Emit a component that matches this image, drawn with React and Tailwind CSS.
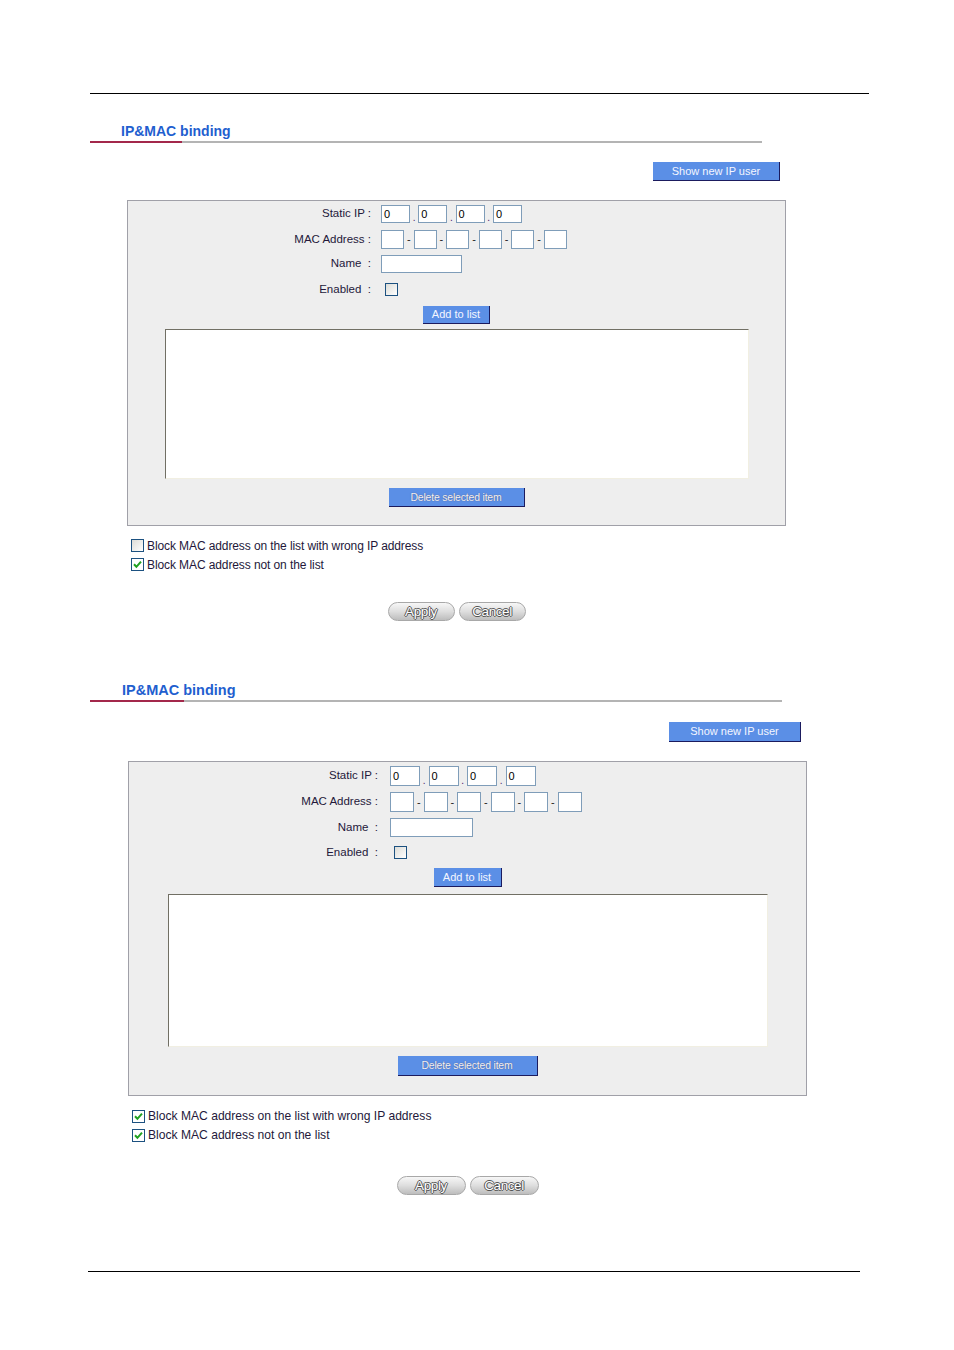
import React from "react";

const FONT = { fontFamily: '"Liberation Sans", Arial, sans-serif' };

const C1 = {
  titleWrap: "mt-[29px] ml-[90px] w-[672px]",
  titleText: "pl-[31px] text-[14px] leading-[16px] h-[16px]",
  red: "w-[92px]",
  showWrap: "mt-[19px] pl-[653px]",
  showBtn: "w-[127px] h-[19px]",
  box: "mt-[19px] ml-[127px] w-[659px] h-[326px] pt-[4px]",
  label: "w-[243px]",
  inGap: "w-[10px]",
  ipIn: "w-[29px] h-[18px]",
  ipSep: "w-[8.3px]",
  macIn: "w-[23px] h-[19px]",
  macSep: "w-[9.6px]",
  name: "w-[81px] h-[18px]",
  row1: "h-[18px]",
  row2: "mt-[7px] h-[19px]",
  row3: "mt-[6px] h-[18px]",
  row4: "mt-[10px] h-[13px]",
  add: "mt-[10px] w-[67px] h-[18px]",
  list: "mt-[5px] w-[584px] h-[150px]",
  del: "mt-[9px] w-[136px] h-[19px]",
  opts: "mt-[10px] ml-[131px]",
  optText: "text-[12px] tracking-[-0.1px]",
  actions: "mt-[28px] ml-[127px] w-[659px]",
  act: "w-[67px] h-[19px]",
  checks: [false, true],
};

const C2 = {
  titleWrap: "mt-[61px] ml-[90px] w-[692px]",
  titleText: "pl-[32px] text-[14.5px] leading-[16px] h-[16px]",
  red: "w-[94px]",
  showWrap: "mt-[20px] pl-[669px]",
  showBtn: "w-[132px] h-[20px]",
  box: "mt-[19px] ml-[128px] w-[679px] h-[335px] pt-[4px]",
  label: "w-[249px]",
  inGap: "w-[12px]",
  ipIn: "w-[30px] h-[20px]",
  ipSep: "w-[8.5px]",
  macIn: "w-[24px] h-[20px]",
  macSep: "w-[9.5px]",
  name: "w-[83px] h-[19px]",
  row1: "h-[20px]",
  row2: "mt-[6px] h-[20px]",
  row3: "mt-[6px] h-[19px]",
  row4: "mt-[9px] h-[13px]",
  add: "mt-[9px] w-[68px] h-[19px]",
  list: "mt-[7px] w-[600px] h-[153px]",
  del: "mt-[9px] w-[140px] h-[20px]",
  opts: "mt-[11px] ml-[132px]",
  optText: "text-[12.1px]",
  actions: "mt-[31px] ml-[128px] w-[679px]",
  act: "w-[69px] h-[19px]",
  checks: [true, true],
};

function CB({ checked }) {
  return (
    <span
      className={
        "inline-flex w-[13px] h-[13px] shrink-0 items-center justify-center border border-[#1c5180] " +
        (checked ? "bg-white" : "bg-linear-to-br from-[#dcdcd7] to-[#ffffff]")
      }
    >
      {checked && (
        <svg width="9" height="9" viewBox="0 0 9 9">
          <path d="M1 4.3 L3.4 6.8 L8 1.6" stroke="#21a121" strokeWidth="2" fill="none" />
        </svg>
      )}
    </span>
  );
}

function Input({ cls, value }) {
  return (
    <div
      className={
        cls +
        " shrink-0 bg-white border border-[#7f9db9] text-[11px] leading-none pl-[2px] flex items-center text-black"
      }
    >
      {value}
    </div>
  );
}

function BlueBtn({ cls, children, embossed }) {
  return (
    <div
      className={
        cls +
        " bg-[#5b8fe6] border-r border-b border-[#1b1b5e] flex items-center justify-center leading-none " +
        (embossed
          ? "text-[#f2f2f8] text-[10.5px] tracking-[-0.2px] [text-shadow:0_0_1px_#4a4a6a]"
          : "text-[#f4f6ff] text-[11px]")
      }
    >
      {children}
    </div>
  );
}

function PillBtn({ cls, children }) {
  return (
    <div
      className={
        cls +
        " rounded-full border border-[#a8a8a8] bg-linear-to-b from-[#f7f7f7] via-[#dedede] to-[#bdbdbd] flex items-center justify-center text-[13.5px] leading-none text-white tracking-[-0.4px] [text-shadow:-1px_0_#555,1px_0_#555,0_-1px_#555,0_1px_#555]"
      }
    >
      {children}
    </div>
  );
}

function Label({ cls, children }) {
  return (
    <div className={cls + " shrink-0 text-right text-[11.5px] text-[#24183a] leading-none whitespace-pre"}>
      {children}
    </div>
  );
}

function Section({ c }) {
  return (
    <div>
      <div className={c.titleWrap}>
        <div className={c.titleText + " font-bold text-[#1f5fcf]"}>IP&amp;MAC binding</div>
        <div className="mt-[2px] flex h-[2px]">
          <div className={c.red + " bg-[#a3284b]"} />
          <div className="flex-1 bg-[#b4b4b4]" />
        </div>
      </div>

      <div className={c.showWrap}>
        <BlueBtn cls={c.showBtn}>Show new IP user</BlueBtn>
      </div>

      <div className={c.box + " border border-[#a0a0a8] bg-[#eeeeee] flex flex-col"}>
        <div className={c.row1 + " flex items-center"}>
          <Label cls={c.label}>Static IP :</Label>
          <div className={c.inGap + " shrink-0"} />
          {[0, 1, 2, 3].map((i) => (
            <React.Fragment key={i}>
              {i > 0 && (
                <div className={c.ipSep + " shrink-0 self-end text-center text-[10px] leading-[10px] text-[#4a1a6a]"}>.</div>
              )}
              <Input cls={c.ipIn} value="0" />
            </React.Fragment>
          ))}
        </div>

        <div className={c.row2 + " flex items-center"}>
          <Label cls={c.label}>MAC Address :</Label>
          <div className={c.inGap + " shrink-0"} />
          {[0, 1, 2, 3, 4, 5].map((i) => (
            <React.Fragment key={i}>
              {i > 0 && <div className={c.macSep + " shrink-0 text-center text-[11px] leading-none text-[#222]"}>-</div>}
              <Input cls={c.macIn} value="" />
            </React.Fragment>
          ))}
        </div>

        <div className={c.row3 + " flex items-center"}>
          <Label cls={c.label}>{"Name  :"}</Label>
          <div className={c.inGap + " shrink-0"} />
          <Input cls={c.name} value="" />
        </div>

        <div className={c.row4 + " flex items-center"}>
          <Label cls={c.label}>{"Enabled  :"}</Label>
          <div className={c.inGap + " shrink-0"} />
          <div className="ml-[4px] flex">
            <CB checked={false} />
          </div>
        </div>

        <div className="flex justify-center">
          <BlueBtn cls={c.add}>Add to list</BlueBtn>
        </div>

        <div className="flex justify-center">
          <div
            className={
              c.list +
              " bg-white border-t border-l border-[#716f64] border-r-[#f1efe2] border-b-[#f1efe2] border-r border-b"
            }
          />
        </div>

        <div className="flex justify-center">
          <BlueBtn cls={c.del} embossed>
            Delete selected item
          </BlueBtn>
        </div>
      </div>

      <div className={c.opts}>
        <div className="h-[19px] flex items-center gap-[3px]">
          <CB checked={c.checks[0]} />
          <span className={c.optText + " text-[#24183a] leading-none"}>
            Block MAC address on the list with wrong IP address
          </span>
        </div>
        <div className="h-[19px] flex items-center gap-[3px]">
          <CB checked={c.checks[1]} />
          <span className={c.optText + " text-[#24183a] leading-none"}>Block MAC address not on the list</span>
        </div>
      </div>

      <div className={c.actions + " flex justify-center gap-[4px]"}>
        <PillBtn cls={c.act}>Apply</PillBtn>
        <PillBtn cls={c.act}>Cancel</PillBtn>
      </div>
    </div>
  );
}

export default function App() {
  return (
    <div className="w-[954px] h-[1350px] bg-white overflow-hidden flow-root" style={FONT}>
      <div className="mt-[93px] ml-[90px] w-[779px] h-px bg-black" />
      <Section c={C1} />
      <Section c={C2} />
      <div className="mt-[76px] ml-[88px] w-[772px] h-px bg-black" />
    </div>
  );
}
